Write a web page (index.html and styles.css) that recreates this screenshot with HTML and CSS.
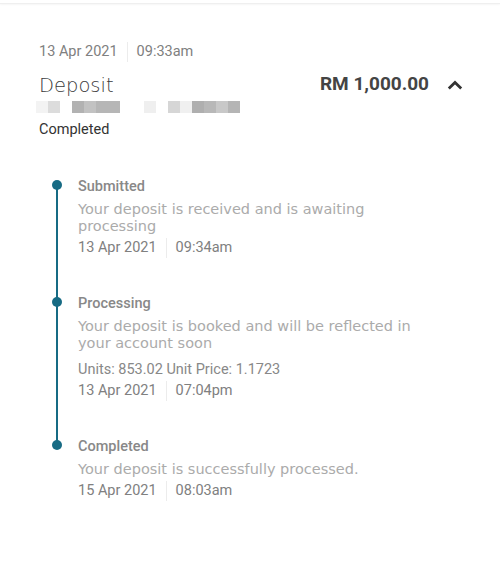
FILE: index.html
```html
<!DOCTYPE html>
<html>
<head>
<meta charset="utf-8">
<link rel="stylesheet" href="styles.css">
</head>
<body>
<div class="topbar"></div>
<div class="card">
  <div class="datetime"><span>13 Apr 2021</span><span class="sep"></span><span>09:33am</span></div>
  <div class="head">
    <div class="title">Deposit</div>
    <div class="amount">RM 1,000.00</div>
    <svg class="chev" width="16" height="10" viewBox="0 0 16 10"><path d="M1.8 8.5 L8 2.5 L14.2 8.5" fill="none" stroke="#333" stroke-width="2.8"/></svg>
  </div>
  <div class="blur">
    <i style="background:#f3f3f3"></i><i style="background:#dcdcdc"></i><i></i><i style="background:#b2b2b2"></i><i style="background:#c2c2c2"></i><i style="background:#b6b6b6"></i><i style="background:#b6b6b6"></i><i></i><i></i><i style="background:#efefef"></i><i></i><i style="background:#d6d6d6"></i><i style="background:#f0f0f0"></i><i style="background:#afafaf"></i><i style="background:#b8b8b8"></i><i style="background:#c8c8c8"></i><i style="background:#b5b5b5"></i>
  </div>
  <div class="status">Completed</div>

  <div class="timeline">
    <div class="step s1">
      <div class="step-title">Submitted</div>
      <div class="desc">Your deposit is received and is awaiting processing</div>
      <div class="datetime small"><span>13 Apr 2021</span><span class="sep"></span><span>09:34am</span></div>
    </div>
    <div class="step s2">
      <div class="step-title">Processing</div>
      <div class="desc">Your deposit is booked and will be reflected in your account soon</div>
      <div class="units">Units: 853.02 Unit Price: 1.1723</div>
      <div class="datetime small"><span>13 Apr 2021</span><span class="sep"></span><span>07:04pm</span></div>
    </div>
    <div class="step s3">
      <div class="step-title">Completed</div>
      <div class="desc">Your deposit is successfully processed.</div>
      <div class="datetime small"><span>15 Apr 2021</span><span class="sep"></span><span>08:03am</span></div>
    </div>
  </div>
</div>
</body>
</html>
```

FILE: styles.css
```css
html, body {
  margin: 0;
  padding: 0;
  background: #fff;
  font-family: Roboto, "Liberation Sans", sans-serif;
}
.topbar {
  height: 3px;
  border-bottom: 1px solid #efefef;
  box-shadow: 0 1px 2px rgba(0,0,0,0.04);
}
.card {
  padding: 38px 0 0 39px;
  width: 424px;
}
.datetime {
  display: flex;
  align-items: center;
  font-size: 14.5px;
  color: #808080;
  line-height: 20px;
}
.sep {
  width: 1px;
  height: 20px;
  background: #ececec;
  margin: 0 9px 0 9px;
}
.head {
  display: flex;
  align-items: center;
  margin-top: 11px;
  height: 24px;
}
.title {
  flex: 1;
  font-family: "DejaVu Sans", sans-serif;
  font-size: 19.5px;
  color: #3a3a3a;
  font-weight: 300;
}
.amount {
  font-size: 19px;
  font-weight: 700;
  color: #444;
  margin-bottom: 3px;
}
.chev {
  margin-left: 18px;
  margin-bottom: 1px;
}
.blur {
  display: flex;
  height: 12px;
  margin-top: 4px;
  margin-left: -3px;
}
.blur i {
  width: 12px;
  height: 12px;
}
.status {
  font-size: 14.5px;
  color: #333;
  margin-top: 7px;
  line-height: 20px;
}
.timeline {
  margin-top: 37px;
  padding-left: 39px;
}
.step {
  position: relative;
}
.step::before {
  content: "";
  position: absolute;
  left: -26px;
  top: 3px;
  width: 10px;
  height: 10px;
  border-radius: 50%;
  background: #176b84;
}
.step::after {
  content: "";
  position: absolute;
  left: -22px;
  top: 8px;
  bottom: -8px;
  width: 2px;
  background: #176b84;
}
.s1 { padding-bottom: 36px; }
.s2 { padding-bottom: 36px; }
.s3::after { display: none; }
.step-title {
  font-size: 14.5px;
  font-weight: 500;
  color: #888;
  line-height: 20px;
}
.desc {
  font-family: "DejaVu Sans", sans-serif;
  font-weight: 400;
  font-size: 14.5px;
  color: #ababab;
  line-height: 17px;
  margin-top: 4px;
  width: 350px;
}
.units {
  font-size: 14.5px;
  color: #888;
  line-height: 20px;
  margin-top: 8px;
}
.datetime.small {
  margin-top: 3px;
}
.s2 .datetime.small { margin-top: 1px; }
.s3 .datetime.small { margin-top: 3px; }
```
